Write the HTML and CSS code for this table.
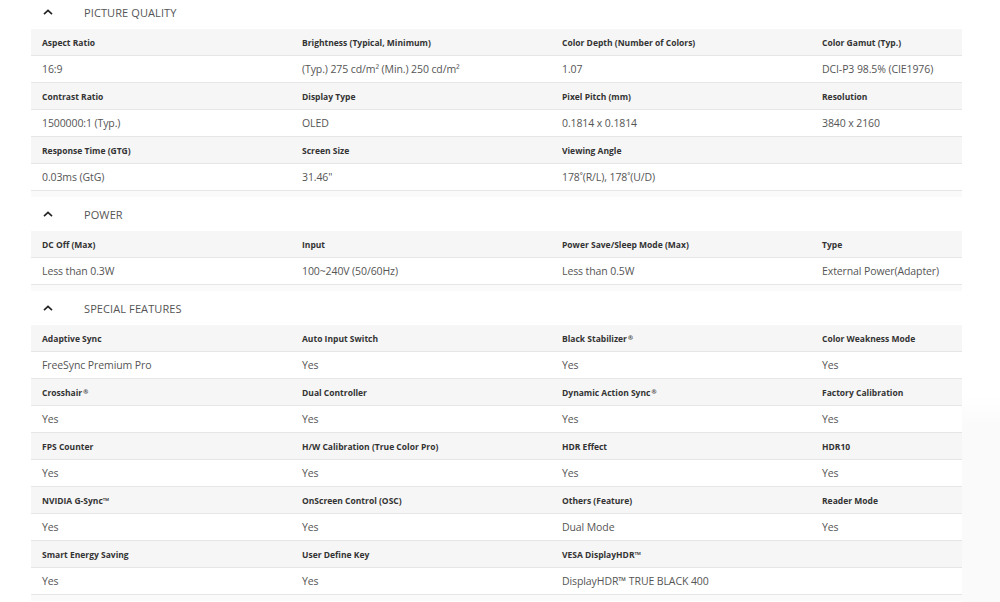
FILE: index.html
```html
<!DOCTYPE html>
<html>
<head>
<meta charset="utf-8">
<link rel="stylesheet" href="styles.css">
</head>
<body>
<div class="side-shade"></div>
<div class="specs">
  <section class="sec">
    <div class="sec-head">
      <svg class="chev" width="10" height="6" viewBox="0 0 10 6"><path d="M1 5.2 L5 1.4 L9 5.2" fill="none" stroke="#222" stroke-width="1.6"/></svg>
      <span class="title">PICTURE QUALITY</span>
    </div>
    <div class="grid">
      <div class="row lbl"><div>Aspect Ratio</div><div>Brightness (Typical, Minimum)</div><div>Color Depth (Number of Colors)</div><div>Color Gamut (Typ.)</div></div>
      <div class="row val"><div>16:9</div><div>(Typ.) 275 cd/m² (Min.) 250 cd/m²</div><div>1.07</div><div>DCI-P3 98.5% (CIE1976)</div></div>
      <div class="row lbl"><div>Contrast Ratio</div><div>Display Type</div><div>Pixel Pitch (mm)</div><div>Resolution</div></div>
      <div class="row val"><div>1500000:1 (Typ.)</div><div>OLED</div><div>0.1814 x 0.1814</div><div>3840 x 2160</div></div>
      <div class="row lbl"><div>Response Time (GTG)</div><div>Screen Size</div><div>Viewing Angle</div><div></div></div>
      <div class="row val"><div>0.03ms (GtG)</div><div>31.46"</div><div>178˚(R/L), 178˚(U/D)</div><div></div></div>
    </div>
  </section>
  <section class="sec">
    <div class="sec-head">
      <svg class="chev" width="10" height="6" viewBox="0 0 10 6"><path d="M1 5.2 L5 1.4 L9 5.2" fill="none" stroke="#222" stroke-width="1.6"/></svg>
      <span class="title">POWER</span>
    </div>
    <div class="grid">
      <div class="row lbl"><div>DC Off (Max)</div><div>Input</div><div>Power Save/Sleep Mode (Max)</div><div>Type</div></div>
      <div class="row val"><div>Less than 0.3W</div><div>100~240V (50/60Hz)</div><div>Less than 0.5W</div><div>External Power(Adapter)</div></div>
    </div>
  </section>
  <section class="sec">
    <div class="sec-head">
      <svg class="chev" width="10" height="6" viewBox="0 0 10 6"><path d="M1 5.2 L5 1.4 L9 5.2" fill="none" stroke="#222" stroke-width="1.6"/></svg>
      <span class="title">SPECIAL FEATURES</span>
    </div>
    <div class="grid">
      <div class="row lbl"><div>Adaptive Sync</div><div>Auto Input Switch</div><div>Black Stabilizer<span class="reg">®</span></div><div>Color Weakness Mode</div></div>
      <div class="row val"><div>FreeSync Premium Pro</div><div>Yes</div><div>Yes</div><div>Yes</div></div>
      <div class="row lbl"><div>Crosshair<span class="reg">®</span></div><div>Dual Controller</div><div>Dynamic Action Sync<span class="reg">®</span></div><div>Factory Calibration</div></div>
      <div class="row val"><div>Yes</div><div>Yes</div><div>Yes</div><div>Yes</div></div>
      <div class="row lbl"><div>FPS Counter</div><div>H/W Calibration (True Color Pro)</div><div>HDR Effect</div><div>HDR10</div></div>
      <div class="row val"><div>Yes</div><div>Yes</div><div>Yes</div><div>Yes</div></div>
      <div class="row lbl"><div>NVIDIA G-Sync™</div><div>OnScreen Control (OSC)</div><div>Others (Feature)</div><div>Reader Mode</div></div>
      <div class="row val"><div>Yes</div><div>Yes</div><div>Dual Mode</div><div>Yes</div></div>
      <div class="row lbl"><div>Smart Energy Saving</div><div>User Define Key</div><div>VESA DisplayHDR™</div><div></div></div>
      <div class="row val"><div>Yes</div><div>Yes</div><div>DisplayHDR™ TRUE BLACK 400</div><div></div></div>
    </div>
  </section>
</div>
</body>
</html>
```

FILE: styles.css
```css
html, body {
  margin: 0;
  padding: 0;
  background: #ffffff;
  overflow: hidden;
}
body {
  font-family: "Open Sans", "Liberation Sans", sans-serif;
  color: #333;
  position: relative;
  height: 602px;
}
.side-shade {
  position: absolute;
  left: 962px;
  top: 396px;
  width: 38px;
  height: 206px;
  background: linear-gradient(to bottom, #ffffff, #fafafa 30px);
}
.specs {
  margin: -5px 0 0 31px;
  width: 931px;
  position: relative;
}
.sec-head {
  height: 34px;
  display: flex;
  align-items: center;
}
.chev {
  margin-left: 12px;
  margin-right: 31px;
  display: block;
}
.title {
  font-size: 11px;
  color: #555;
  letter-spacing: 0.1px;
}
.grid {
  padding-bottom: 6px;
  background: linear-gradient(to bottom, transparent calc(100% - 6px), #fafafa calc(100% - 6px));
}
.row {
  display: grid;
  grid-template-columns: 260px 260px 260px 1fr;
  height: 27px;
  box-sizing: border-box;
  border-bottom: 1px solid #e6e6e6;
  align-items: center;
}
.row > div {
  padding-left: 11px;
  white-space: nowrap;
}
.lbl {
  background: #f6f6f6;
  font-size: 8.5px;
  font-weight: 700;
  color: #333;
}
.reg {
  font-size: 6px;
  vertical-align: 2px;
  margin-left: 1px;
}
.val {
  background: #fff;
  font-size: 10.5px;
  color: #555;
  letter-spacing: -0.1px;
}
```
